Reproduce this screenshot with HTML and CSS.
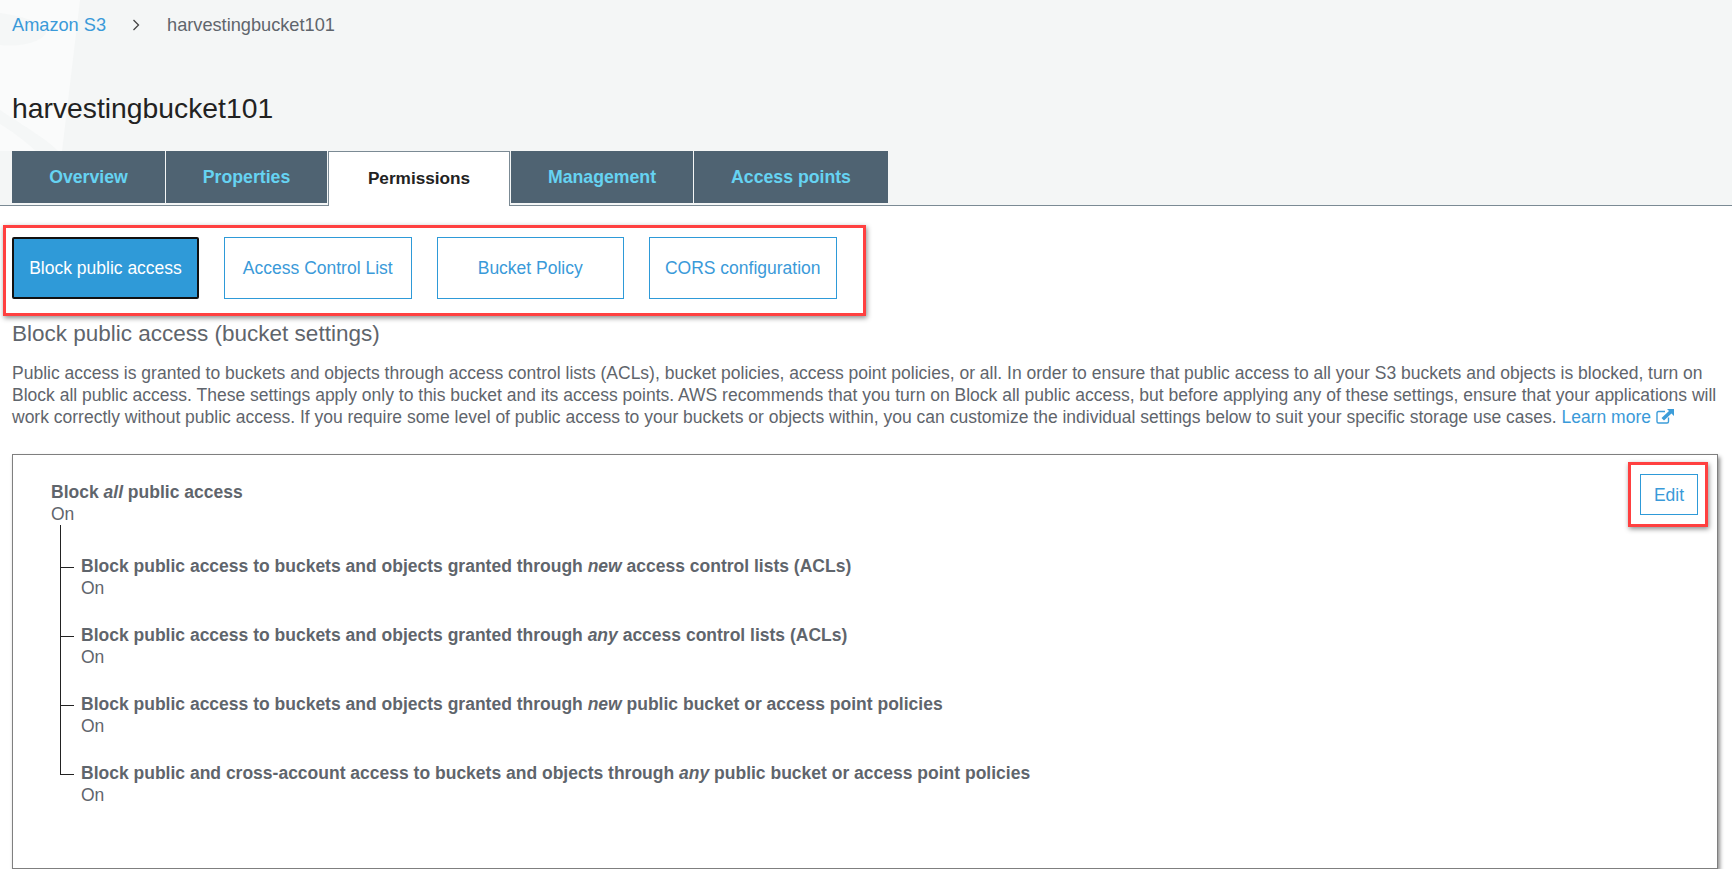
FILE: index.html
```html
<!DOCTYPE html>
<html>
<head>
    <title>harvestingbucket101 - S3</title>
    <link rel="stylesheet" href="styles.css">
</head>
<body>
    <div class="header">
        <svg class="watermark" width="200" height="205" viewBox="0 0 200 205">
            <path d="M0 0H80L62 151H0Z" fill="#fafbfb"/>
            <path d="M0 13C30 17 48 26 46 33C40 44 15 47 0 45Z" fill="#f5f7f7"/>
            <path d="M0 110C24 126 48 140 58 151H36C24 140 10 130 0 124Z" fill="#f5f7f7"/>
        </svg>
        <div class="crumbs">
            <a href="#">Amazon S3</a>
            <svg class="crumb-sep" width="8" height="12" viewBox="0 0 8 12"><path d="M1.5 1L6.5 6L1.5 11" fill="none" stroke="#444" stroke-width="1.3"/></svg>
            <span>harvestingbucket101</span>
        </div>
        <h1>harvestingbucket101</h1>
        <div class="tabs">
            <a class="tab tab-overview" href="#">Overview</a>
            <a class="tab tab-properties" href="#">Properties</a>
            <a class="tab tab-permissions active" href="#">Permissions</a>
            <a class="tab tab-management" href="#">Management</a>
            <a class="tab tab-access" href="#">Access points</a>
        </div>
    </div>

    <div class="content">
        <div class="callout subnav">
            <a class="subbtn selected" href="#">Block public access</a>
            <a class="subbtn" href="#">Access Control List</a>
            <a class="subbtn" href="#">Bucket Policy</a>
            <a class="subbtn" href="#">CORS configuration</a>
        </div>

        <h2>Block public access (bucket settings)</h2>
        <p class="intro">Public access is granted to buckets and objects through access control lists (ACLs), bucket policies, access point policies, or all. In order to ensure that public access to all your S3 buckets and objects is blocked, turn on Block all public access. These settings apply only to this bucket and its access points. AWS recommends that you turn on Block all public access, but before applying any of these settings, ensure that your applications will work correctly without public access. If you require some level of public access to your buckets or objects within, you can customize the individual settings below to suit your specific storage use cases. <a href="#">Learn more <svg class="ext" width="19" height="16" viewBox="0 0 19 16"><path d="M9 3.500H2.500Q1 3.500 1 5V13.500Q1 15 2.500 15H11Q12.500 15 12.500 13.500V9.500" fill="none" stroke="#3d9dd9" stroke-width="1.400"/><path d="M6 10.500L13.500 3.500M11 1H18V8L15.500 5.500L8 12.500L5.500 10L13 3Z" fill="#3d9dd9"/></svg></a></p>

        <div class="card">
            <div class="callout edit-callout">
                <a class="edit" href="#">Edit</a>
            </div>
            <div class="setting">
                <b>Block <i>all</i> public access</b>
                <div>On</div>
            </div>
            <div class="children">
                <div class="child">
                    <b>Block public access to buckets and objects granted through <i>new</i> access control lists (ACLs)</b>
                    <div>On</div>
                </div>
                <div class="child">
                    <b>Block public access to buckets and objects granted through <i>any</i> access control lists (ACLs)</b>
                    <div>On</div>
                </div>
                <div class="child">
                    <b>Block public access to buckets and objects granted through <i>new</i> public bucket or access point policies</b>
                    <div>On</div>
                </div>
                <div class="child">
                    <b>Block public and cross-account access to buckets and objects through <i>any</i> public bucket or access point policies</b>
                    <div>On</div>
                </div>
            </div>
        </div>
    </div>
</body>
</html>
```

FILE: styles.css
```css
html, body {
    margin: 0;
    padding: 0;
}
body {
    font-family: "Liberation Sans", Arial, sans-serif;
    font-size: 16px;
    line-height: 22px;
    color: #5f656c;
    background: #fff;
    overflow: hidden;
}
a {
    color: #3a9ad9;
    text-decoration: none;
}
.header {
    position: relative;
    height: 205px;
    background: #f4f6f6;
    border-bottom: 1px solid #7b8a94;
}
.watermark {
    position: absolute;
    left: 0;
    top: 0;
}
.crumbs {
    position: relative;
    display: flex;
    align-items: center;
    height: 22px;
    padding: 14px 0 0 12px;
    font-size: 18.2px;
}
.crumb-sep {
    margin: 0 27px 0 26px;
}
h1 {
    position: relative;
    margin: 52px 0 0 12px;
    height: 40px;
    font-size: 28.3px;
    line-height: 40px;
    font-weight: normal;
    color: #222;
}
.tabs {
    position: relative;
    display: flex;
    margin: 23px 0 0 12px;
    gap: 1px;
    height: 52px;
}
.tab {
    display: flex;
    align-items: center;
    justify-content: center;
    background: #4f6372;
    color: #66d3f2;
    font-weight: bold;
    font-size: 17.7px;
}
.tab-overview { width: 153px; }
.tab-properties { width: 161px; }
.tab-permissions { width: 182px; }
.tab-management { width: 182px; }
.tab-access { width: 194px; }
.tab.active {
    background: #fff;
    color: #222;
    border: 1px solid #7b8a94;
    border-bottom: none;
    height: 55px;
    box-sizing: border-box;
    z-index: 1;
    font-size: 17.2px;
    padding-bottom: 2px;
}
.content {
    padding: 0 12px;
}
.callout {
    border: 3px solid #ff4040;
    box-shadow: 1px 2px 5px rgba(0, 0, 0, 0.45);
}
.subnav {
    display: flex;
    gap: 25px;
    margin: 19px 0 0 -9px;
    padding: 9px 0 0 6px;
    width: 851px;
    height: 76px;
}
.subbtn {
    display: flex;
    align-items: center;
    justify-content: center;
    width: 187.5px;
    height: 62px;
    box-sizing: border-box;
    border: 1px solid #2e9ad8;
    font-size: 17.5px;
}
.subbtn.selected {
    background: #2f9ad8;
    color: #fff;
    border: 2px solid #111;
    border-radius: 2px;
    width: 187px;
}
h2 {
    margin: 5px 0 0;
    font-size: 22.5px;
    line-height: 26px;
    font-weight: normal;
}
.intro {
    margin: 15px 0 0;
    font-size: 17.5px;
}
.ext {
    vertical-align: -1px;
}
.card {
    position: relative;
    margin-top: 26px;
    width: 1706px;
    height: 415px;
    box-sizing: border-box;
    border: 1px solid #7f7f7f;
    box-shadow: 2px 3px 4px rgba(0, 0, 0, 0.45);
    padding: 26px 0 0 38px;
    font-size: 17.5px;
}
.edit-callout {
    position: absolute;
    top: 7px;
    right: 9px;
    padding: 9px 7px 9px 9px;
}
.edit {
    display: flex;
    align-items: center;
    justify-content: center;
    width: 58px;
    height: 41px;
    box-sizing: border-box;
    border: 1px solid #2e9ad8;
}
.children {
    margin: 0 0 0 9px;
    border-left: 1px solid #222;
    height: 250px;
    box-sizing: border-box;
    padding: 30px 0 0 20px;
    position: relative;
}
.child {
    position: relative;
    height: 69px;
}
.child::before {
    content: "";
    position: absolute;
    left: -20px;
    top: 12px;
    width: 13px;
    border-top: 1px solid #222;
}
```
